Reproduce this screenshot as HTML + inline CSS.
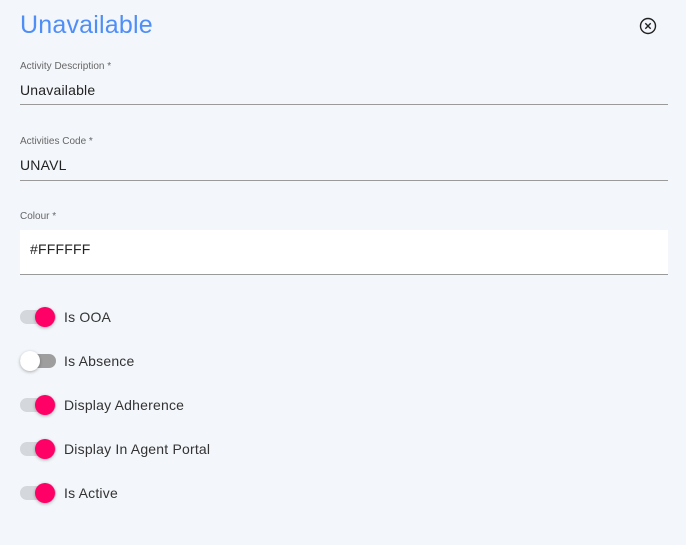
<!DOCTYPE html>
<html><head><style>
body{margin:0;width:686px;height:545px;background:#f3f6fa;font-family:"Liberation Sans",sans-serif;position:relative;overflow:hidden;color:#222}
.a{position:absolute}
.t{left:20px;top:11px;font-size:25px;color:#4f8ef7;letter-spacing:0.2px}
.lab{left:20px;font-size:10px;color:#666}
.val{left:20px;font-size:14px;color:#222;letter-spacing:0.2px}
.line{left:20px;width:648px;height:1px;background:#9a9a9a}
.tr{left:20px;width:36px;height:14px;border-radius:7px;background:#d4d8dc}
.th{width:20px;height:20px;border-radius:50%;background:#ff0066;box-shadow:0 1px 3px rgba(0,0,0,.3)}
.tl{left:64px;font-size:14px;color:#333;letter-spacing:0.2px}
</style></head><body>
<div class="a t">Unavailable</div>
<svg class="a" style="left:639px;top:17px" width="18" height="18" viewBox="0 0 18 18"><circle cx="9" cy="9" r="7.5" fill="none" stroke="#222" stroke-width="1.4"/><path d="M6.3 6.3L11.7 11.7M11.7 6.3L6.3 11.7" stroke="#222" stroke-width="1.4"/></svg>
<div class="a lab" style="top:61px">Activity Description *</div>
<div class="a val" style="top:82px">Unavailable</div>
<div class="a line" style="top:104px"></div>
<div class="a lab" style="top:136px">Activities Code *</div>
<div class="a val" style="top:157px">UNAVL</div>
<div class="a line" style="top:180px"></div>
<div class="a lab" style="top:211px">Colour *</div>
<div class="a" style="left:20px;top:230px;width:648px;height:44px;background:#fff"></div>
<div class="a val" style="left:30px;top:241px">#FFFFFF</div>
<div class="a line" style="top:274px"></div>

<div class="a tr" style="top:310px"></div><div class="a th" style="left:35px;top:307px"></div><div class="a tl" style="top:309px">Is OOA</div>
<div class="a tr" style="top:354px;background:#9e9e9e"></div><div class="a th" style="left:20px;top:351px;background:#fff"></div><div class="a tl" style="top:353px">Is Absence</div>
<div class="a tr" style="top:398px"></div><div class="a th" style="left:35px;top:395px"></div><div class="a tl" style="top:397px">Display Adherence</div>
<div class="a tr" style="top:442px"></div><div class="a th" style="left:35px;top:439px"></div><div class="a tl" style="top:441px">Display In Agent Portal</div>
<div class="a tr" style="top:486px"></div><div class="a th" style="left:35px;top:483px"></div><div class="a tl" style="top:485px">Is Active</div>
</body></html>
